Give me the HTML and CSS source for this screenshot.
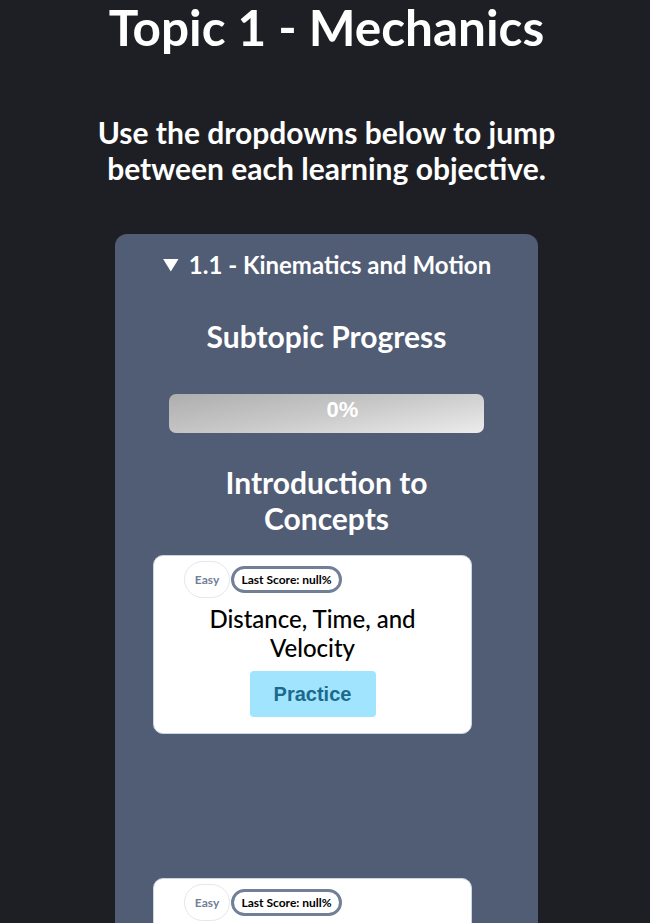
FILE: index.html
```html
<!DOCTYPE html>
<html lang="en">
<head>
<meta charset="utf-8">
<title>Topic 1 - Mechanics</title>
<link rel="stylesheet" href="styles.css">
</head>
<body>
<main class="page">
  <h1 class="title">Topic 1 - Mechanics</h1>
  <p class="subtitle">Use the dropdowns below to jump between each learning objective.</p>
  <details class="subtopic" open>
    <summary class="subtopic-summary"><span class="caret"></span>1.1 - Kinematics and Motion</summary>
    <div class="subtopic-body">
      <h2 class="section-title">Subtopic Progress</h2>
      <div class="progress"><span class="progress-label">0%</span></div>
      <h2 class="section-title intro">Introduction to Concepts</h2>
      <div class="cards">
        <article class="ex-card">
          <div class="pills">
            <span class="pill pill-easy">Easy</span>
            <span class="pill pill-score">Last Score: null%</span>
          </div>
          <h3 class="ex-title">Distance, Time, and Velocity</h3>
          <button class="practice">Practice</button>
        </article>
        <article class="ex-card">
          <div class="pills">
            <span class="pill pill-easy">Easy</span>
            <span class="pill pill-score">Last Score: null%</span>
          </div>
          <h3 class="ex-title">Speed and Acceleration</h3>
          <button class="practice">Practice</button>
        </article>
      </div>
    </div>
  </details>
</main>
</body>
</html>
```
FILE: styles.css
```css
html, body {
  margin: 0;
  padding: 0;
  background: #1e1f24;
}
body {
  font-family: Lato, "Noto Sans", sans-serif;
  color: #ffffff;
  overflow: hidden;
}
.page {
  display: flex;
  flex-direction: column;
  align-items: center;
  padding-left: 3px;
}
.title {
  margin: -2.5px 0 0 0;
  font-size: 49.5px;
  line-height: 58px;
  font-weight: 700;
}
.subtitle {
  margin: 58px 0 0 0;
  width: 480px;
  text-align: center;
  font-size: 30px;
  line-height: 36px;
  font-weight: 700;
}
.subtopic {
  margin-top: 48.5px;
  width: 423px;
  background: #515c75;
  border-radius: 12px;
  padding: 16px 0 40px;
  box-sizing: border-box;
}
.subtopic-summary {
  list-style: none;
  display: flex;
  align-items: center;
  justify-content: center;
  font-size: 24px;
  line-height: 30px;
  font-weight: 700;
  cursor: pointer;
  margin-left: 1px;
}
.subtopic-summary::-webkit-details-marker { display: none; }
.caret {
  display: inline-block;
  width: 16px;
  height: 13px;
  background: #ffffff;
  clip-path: polygon(0 0, 100% 0, 50% 100%);
  margin-right: 10px;
}
.subtopic-body {
  display: flex;
  flex-direction: column;
  align-items: center;
}
.section-title {
  margin: 38px 0 0 0;
  font-size: 30px;
  line-height: 36px;
  font-weight: 700;
  text-align: center;
}
.progress {
  margin-top: 40px;
  width: 315px;
  height: 39px;
  border-radius: 7px;
  background: linear-gradient(170deg, #aeaeae 0%, #c9c9c9 50%, #ececec 100%);
  display: flex;
  align-items: center;
  justify-content: center;
}
.progress-label {
  font-family: "Liberation Sans", Arial, sans-serif;
  font-weight: 700;
  font-size: 22px;
  color: #ffffff;
  margin-left: 32px;
  margin-top: -8px;
}
.section-title.intro {
  margin-top: 31px;
  width: 250px;
}
.cards {
  margin-top: 19px;
  display: flex;
  flex-direction: column;
  gap: 144px;
  margin-right: 28px;
}
.ex-card {
  width: 319px;
  height: 179px;
  box-sizing: border-box;
  background: #ffffff;
  border: 1px solid #cbd5e0;
  border-radius: 10px;
  padding: 5px 0 0 30px;
  color: #000000;
  display: flex;
  flex-direction: column;
  align-items: center;
}
.pills {
  align-self: flex-start;
  display: flex;
  align-items: center;
  gap: 1px;
}
.pill {
  font-size: 12px;
  font-weight: 700;
  border-radius: 999px;
  box-sizing: border-box;
  display: inline-flex;
  align-items: center;
  justify-content: center;
}
.pill-easy {
  width: 46px;
  height: 37px;
  border: 1px solid #e2e8f0;
  color: #718096;
}
.pill-score {
  height: 27px;
  padding: 0 7.5px;
  border: 3px solid #718096;
  color: #000000;
}
.ex-title {
  margin: 6px 0 0 -30px;
  width: 240px;
  text-align: center;
  font-size: 24px;
  line-height: 29px;
  font-weight: 500;
}
.practice {
  margin: 9px 0 0 -30px;
  width: 126px;
  height: 46px;
  border: none;
  border-radius: 4px;
  background: #a1e4fe;
  color: #1b6a8d;
  font-family: "Liberation Sans", Arial, sans-serif;
  font-size: 20px;
  font-weight: 700;
  cursor: pointer;
}
```
